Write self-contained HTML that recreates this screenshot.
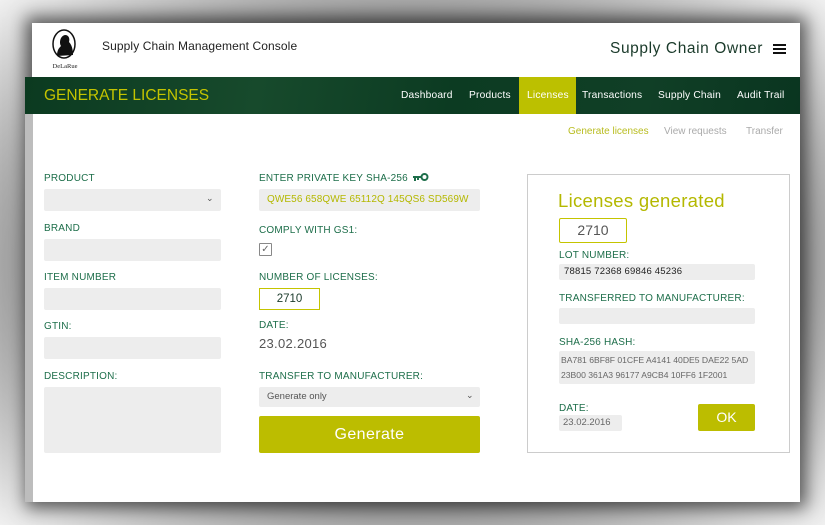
<!DOCTYPE html>
<html><head><meta charset="utf-8"><style>
*{margin:0;padding:0;box-sizing:border-box}
body{width:825px;height:525px;overflow:hidden;background:radial-gradient(ellipse at 50% 50%,#555 0%,#999 65%,#f0f0f0 100%);font-family:"Liberation Sans",sans-serif;position:relative}
.a{position:absolute}
#page{left:32px;top:23px;width:768px;height:479px;background:#fff;box-shadow:0 0 16px 6px rgba(0,0,0,.6)}
.strip{left:25px;top:80px;width:8px;height:422px;background:#bdbdbd}
.nav{left:25px;top:77px;width:775px;height:37px;background:linear-gradient(100deg,#0b3a20 0%,#174a2c 30%,#0c3b22 55%,#103f26 80%,#0a3520 100%)}
.lab{font-size:10px;color:#1d6e4a;letter-spacing:.2px}
.f{background:#ededed;border-radius:2px}
.ni{top:77px;height:37px;line-height:37px;font-size:10.2px;color:#fff;letter-spacing:.2px}
.sub{top:126px;font-size:10px;color:#aaa}
</style></head><body>
<div class="a" id="page"></div>
<div class="a strip"></div>
<svg class="a" style="left:48px;top:28px" width="34" height="44" viewBox="0 0 34 44">
<ellipse cx="16" cy="16" rx="11" ry="14" fill="#fff" stroke="#111" stroke-width="1.5"/>
<path d="M9 28 C9 22 11 20 13 18 C11 15 12 8 17 7 C21 7 22 11 21 14 C24 17 25 22 25 27 Z" fill="#111"/>
<text x="17" y="40" font-size="6.5" text-anchor="middle" font-family="Liberation Serif" fill="#222">DeLaRue</text>
</svg>
<div class="a" style="left:102px;top:39px;font-size:12px;color:#222;letter-spacing:.1px">Supply Chain Management Console</div>
<div class="a" style="left:610px;top:40px;font-size:15.5px;color:#1a3a2a;letter-spacing:.6px">Supply Chain Owner</div>
<div class="a" style="left:773px;top:44px;width:13px;height:2px;background:#111;box-shadow:0 4px 0 #111,0 8px 0 #111"></div>
<div class="a nav"></div>
<div class="a" style="left:44px;top:87px;font-size:15.5px;color:#c4c400;letter-spacing:0">GENERATE LICENSES</div>
<div class="a ni" style="left:401px">Dashboard</div>
<div class="a ni" style="left:469px">Products</div>
<div class="a" style="left:519px;top:77px;width:57px;height:37px;background:#bcc000"></div>
<div class="a ni" style="left:527px">Licenses</div>
<div class="a ni" style="left:582px">Transactions</div>
<div class="a ni" style="left:658px">Supply Chain</div>
<div class="a ni" style="left:737px">Audit Trail</div>
<div class="a sub" style="left:568px;color:#b8bc1e">Generate licenses</div>
<div class="a sub" style="left:664px">View requests</div>
<div class="a sub" style="left:746px">Transfer</div>

<div class="a lab" style="left:44px;top:173px">PRODUCT</div>
<div class="a f" style="left:44px;top:189px;width:177px;height:22px"></div>
<div class="a" style="left:206px;top:193px;font-size:9px;color:#555">&#8964;</div>
<div class="a lab" style="left:44px;top:223px">BRAND</div>
<div class="a f" style="left:44px;top:239px;width:177px;height:22px"></div>
<div class="a lab" style="left:44px;top:272px">ITEM NUMBER</div>
<div class="a f" style="left:44px;top:288px;width:177px;height:22px"></div>
<div class="a lab" style="left:44px;top:321px">GTIN:</div>
<div class="a f" style="left:44px;top:337px;width:177px;height:22px"></div>
<div class="a lab" style="left:44px;top:371px">DESCRIPTION:</div>
<div class="a f" style="left:44px;top:387px;width:177px;height:66px"></div>

<div class="a lab" style="left:259px;top:173px">ENTER PRIVATE KEY SHA-256</div>
<svg class="a" style="left:413px;top:173px" width="16" height="9" viewBox="0 0 16 9"><circle cx="11.5" cy="4" r="3" fill="none" stroke="#1d6e4a" stroke-width="2"/><path d="M0 3h9v2H0zM1 5h2v3H1zM4 5h2v2H4z" fill="#1d6e4a"/></svg>
<div class="a f" style="left:259px;top:189px;width:221px;height:22px;font-size:10px;color:#b4b800;line-height:22px;padding-left:8px;letter-spacing:.1px;white-space:nowrap;overflow:hidden">QWE56 658QWE 65112Q 145QS6 SD569W</div>
<div class="a lab" style="left:259px;top:225px">COMPLY WITH GS1:</div>
<div class="a" style="left:259px;top:243px;width:13px;height:13px;border:1px solid #888;border-radius:1px;font-size:10px;color:#666;line-height:11px;text-align:center">&#10003;</div>
<div class="a lab" style="left:259px;top:272px">NUMBER OF LICENSES:</div>
<div class="a" style="left:259px;top:288px;width:61px;height:22px;border:1px solid #c4c400;font-size:11.5px;color:#1a3a2a;text-align:center;line-height:20px">2710</div>
<div class="a lab" style="left:259px;top:320px">DATE:</div>
<div class="a" style="left:259px;top:336px;font-size:13px;color:#555;letter-spacing:.3px">23.02.2016</div>
<div class="a lab" style="left:259px;top:371px">TRANSFER TO MANUFACTURER:</div>
<div class="a f" style="left:259px;top:387px;width:221px;height:20px;font-size:9.5px;color:#555;line-height:20px;padding-left:8px">Generate only</div>
<div class="a" style="left:466px;top:390px;font-size:9px;color:#555">&#8964;</div>
<div class="a" style="left:259px;top:416px;width:221px;height:37px;background:#bcbd00;border-radius:2px;color:#fff;font-size:16px;text-align:center;line-height:37px;letter-spacing:.4px">Generate</div>

<div class="a" style="left:527px;top:174px;width:263px;height:279px;border:1px solid #ccc"></div>
<div class="a" style="left:558px;top:190px;font-size:18.5px;color:#b4b800;letter-spacing:.3px">Licenses generated</div>
<div class="a" style="left:559px;top:218px;width:68px;height:25px;border:1px solid #c4c400;border-radius:2px;font-size:14px;color:#555;text-align:center;line-height:23px">2710</div>
<div class="a lab" style="left:559px;top:250px">LOT NUMBER:</div>
<div class="a f" style="left:559px;top:264px;width:196px;height:16px;font-size:9.5px;color:#222;line-height:16px;padding-left:5px;letter-spacing:.2px">78815 72368 69846 45236</div>
<div class="a lab" style="left:559px;top:293px">TRANSFERRED TO MANUFACTURER:</div>
<div class="a f" style="left:559px;top:308px;width:196px;height:16px"></div>
<div class="a lab" style="left:559px;top:337px">SHA-256 HASH:</div>
<div class="a f" style="left:559px;top:351px;width:196px;height:33px;font-size:8.6px;color:#666;line-height:15px;padding:2px 0 0 2px;white-space:nowrap;overflow:hidden">BA781 6BF8F 01CFE A4141 40DE5 DAE22 5AD<br>23B00 361A3 96177 A9CB4 10FF6 1F2001</div>
<div class="a lab" style="left:559px;top:403px">DATE:</div>
<div class="a f" style="left:559px;top:415px;width:63px;height:16px;font-size:9.5px;color:#666;line-height:16px;padding-left:4px">23.02.2016</div>
<div class="a" style="left:698px;top:404px;width:57px;height:27px;background:#bcbd00;border-radius:2px;color:#fff;font-size:14px;text-align:center;line-height:27px">OK</div>
</body></html>
